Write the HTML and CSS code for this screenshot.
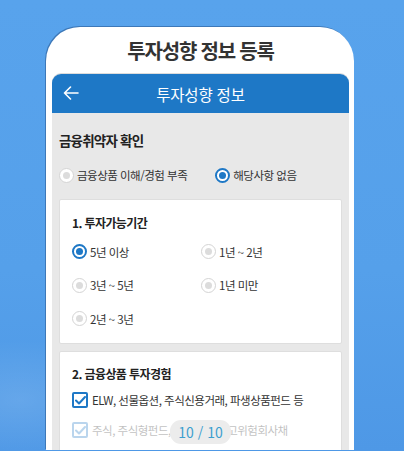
FILE: index.html
```html
<!DOCTYPE html>
<html lang="ko">
<head>
<meta charset="utf-8">
<link rel="stylesheet" href="styles.css">
</head>
<body>
<div class="stage">
  <div class="phone">
    <h1 class="phone-title">투자성향 정보 등록</h1>
    <div class="screen">
      <div class="appbar">
        <svg class="back" width="16" height="14" viewBox="0 0 16 14"><path d="M15 7H1.5M7.5 1L1.5 7l6 6" fill="none" stroke="#fff" stroke-width="1.6" stroke-linecap="round" stroke-linejoin="round"/></svg>
        <span class="appbar-title">투자성향 정보</span>
      </div>
      <div class="content">
        <h2 class="sec-title">금융취약자 확인</h2>
        <div class="radio-row">
          <label class="opt"><span class="radio"></span>금융상품 이해/경험 부족</label>
          <label class="opt opt-2"><span class="radio on"></span>해당사항 없음</label>
        </div>
        <div class="card">
          <h3 class="card-title">1. 투자가능기간</h3>
          <div class="grid">
            <label class="opt"><span class="radio on"></span>5년 이상</label>
            <label class="opt"><span class="radio"></span>1년 ~ 2년</label>
            <label class="opt"><span class="radio"></span>3년 ~ 5년</label>
            <label class="opt"><span class="radio"></span>1년 미만</label>
            <label class="opt"><span class="radio"></span>2년 ~ 3년</label>
          </div>
        </div>
        <div class="card card-2">
          <h3 class="card-title">2. 금융상품 투자경험</h3>
          <label class="opt check-row"><span class="check"><svg width="11" height="9" viewBox="0 0 11 9"><path d="M1 4.5l3 3 6-6.5" fill="none" stroke="#1e78c6" stroke-width="2" stroke-linecap="round" stroke-linejoin="round"/></svg></span>ELW, 선물옵션, 주식신용거래, 파생상품펀드 등</label>
          <label class="opt check-row faded"><span class="check"><svg width="11" height="9" viewBox="0 0 11 9"><path d="M1 4.5l3 3 6-6.5" fill="none" stroke="#1e78c6" stroke-width="2" stroke-linecap="round" stroke-linejoin="round"/></svg></span>주식, 주식형펀드, 주식형ELS, 고위험회사채</label>
          <div class="pager">10 / 10</div>
        </div>
      </div>
    </div>
  </div>
</div>
</body>
</html>
```
FILE: styles.css
```css
* { box-sizing: border-box; margin: 0; padding: 0; }
html, body { width: 404px; height: 451px; overflow: hidden; }
body {
  font-family: "Noto Sans CJK KR", "Noto Sans", sans-serif;
  background: linear-gradient(180deg, #58a3ec 0%, #55a0ea 60%, #4e98e6 100%);
}
.stage {
  height: 451px;
  padding-top: 27px;
  padding-left: 46px;
  background: radial-gradient(ellipse 120px 60px at 20px 400px, rgba(255,255,255,0.12), transparent);
}
.phone {
  width: 308px;
  height: 423px;
  background: #fff;
  border-radius: 34px 34px 0 0;
  box-shadow: -1px -1px 0 #3d78b8;
  padding: 0 5px 0 6px;
  overflow: hidden;
}
.phone-title {
  height: 47px;
  line-height: 48px;
  text-align: center;
  font-size: 20px;
  font-weight: 700;
  color: #333;
  letter-spacing: -1.2px;
}
.screen {
  height: 376px;
  border-radius: 9px 9px 0 0;
  overflow: hidden;
  background: #e8e8e8;
  box-shadow: 0 -1px 0 #dcdcdc;
}
.appbar {
  position: relative;
  height: 39px;
  background: #1e78c6;
  display: flex;
  align-items: center;
  justify-content: center;
}
.back { position: absolute; left: 11px; top: 12px; }
.appbar-title { color: #fff; font-size: 15.5px; font-weight: 400; letter-spacing: -0.2px; }
.content {
  padding: 16px 7px 0 7px;
}
.sec-title {
  font-size: 13.5px;
  font-weight: 700;
  color: #222;
  line-height: 22px;
  letter-spacing: -0.8px;
}
.radio-row {
  display: flex;
  margin-top: 14px;
  height: 20px;
  align-items: center;
}
.opt {
  display: flex;
  align-items: center;
  font-size: 11.5px;
  color: #333;
  line-height: 18px;
  white-space: nowrap;
  letter-spacing: -0.5px;
}
.opt-2 { margin-left: 28px; }
.radio {
  width: 15px;
  height: 15px;
  border-radius: 50%;
  border: 1px solid #d4d4d4;
  background: #fff;
  display: flex;
  align-items: center;
  justify-content: center;
  margin-right: 3px;
  flex: none;
}
.radio::after {
  content: "";
  width: 7px;
  height: 7px;
  border-radius: 50%;
  background: #dcdcdc;
}
.radio.on { border: 2px solid #1e78c6; }
.radio.on::after { background: #1e78c6; }
.card {
  background: #fff;
  border: 1px solid #dedede;
  border-radius: 2px;
  margin-top: 14px;
  padding: 13px 12px 0 12px;
  height: 145px;
}
.card-title {
  font-size: 12px;
  font-weight: 700;
  color: #222;
  line-height: 20px;
  letter-spacing: -0.6px;
}
.grid {
  display: grid;
  grid-template-columns: 129px 1fr;
  grid-auto-rows: 33.5px;
  margin-top: 2px;
  align-items: center;
}
.card-2 {
  position: relative;
  margin-top: 7px;
  height: 120px;
  padding-top: 12px;
}
.check-row { height: 20px; margin-top: 6px; }
.check-row.faded { margin-top: 10px; opacity: 0.3; }
.check {
  width: 16px;
  height: 16px;
  border: 2px solid #1e78c6;
  border-radius: 2px;
  background: #fff;
  display: flex;
  align-items: center;
  justify-content: center;
  margin-right: 4px;
  flex: none;
}
.pager {
  position: absolute;
  left: 110px;
  top: 68px;
  width: 61px;
  height: 24px;
  border-radius: 11px;
  background: #ececec;
  color: #3d9fcf;
  font-size: 14px;
  text-align: center;
  line-height: 24px;
}
```
